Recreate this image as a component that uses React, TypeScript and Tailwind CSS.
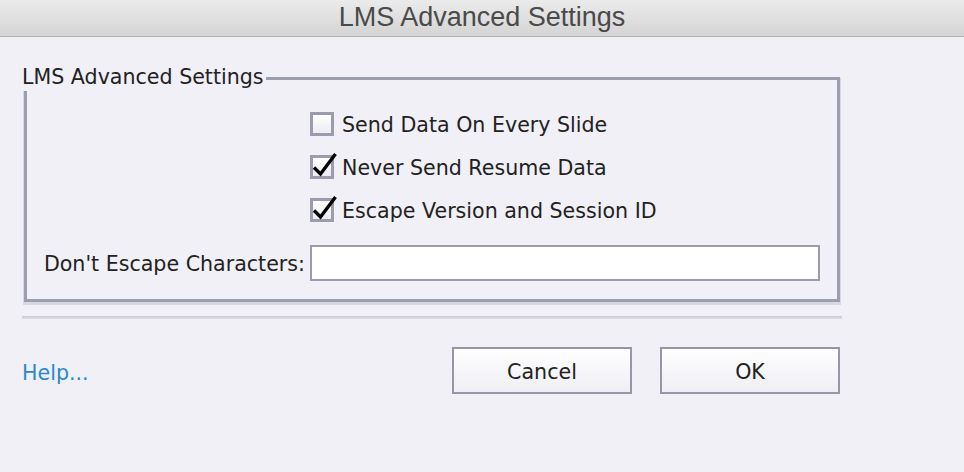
import React from "react";

function Check({ checked }: { checked: boolean }) {
  return (
    <span className="relative block w-[24px] h-[24px] shrink-0 border-[3px] border-[#9b9dae] bg-gradient-to-b from-[#ffffff] to-[#ececf2]">
      {checked && (
        <svg
          className="absolute left-[-3px] top-[-3px] overflow-visible"
          width="24"
          height="24"
          viewBox="0 0 24 24"
        >
          <path
            d="M4 12.5 L10.5 19 L25.5 -1"
            fill="none"
            stroke="#000"
            strokeWidth="3.4"
            strokeLinecap="butt"
            strokeLinejoin="miter"
          />
        </svg>
      )}
    </span>
  );
}

function Row({ label, checked }: { label: string; checked: boolean }) {
  return (
    <div className="flex items-center h-[24px] gap-[8px]">
      <Check checked={checked} />
      <span className="leading-none whitespace-nowrap pt-[3px]">{label}</span>
    </div>
  );
}

export default function App() {
  return (
    <div
      className="w-[964px] h-[472px] bg-[#f0f0f6] text-[#222222] overflow-hidden"
      style={{ fontFamily: '"DejaVu Sans", Verdana, sans-serif' }}
    >
      <div
        className="h-[37px] flex items-center justify-center border-b border-[#b3b3b3] bg-gradient-to-b from-[#ebebeb] to-[#d4d4d4] text-[27px] text-[#4a4a4a] leading-none pb-[2px]"
        style={{ fontFamily: '"Liberation Sans", Arial, sans-serif' }}
      >
        LMS Advanced Settings
      </div>

      <div className="pl-[22px] w-[842px] text-[20.6px]">
        <div className="relative ml-[2px] mt-[40px] w-[816px] h-[225px] border-[3px] border-[#9c9eaf] shadow-[0_2px_0_1px_#d6d7df] pt-[32px] pl-[283px] pr-[17px]">
          <div className="absolute left-[-5px] top-[-16px] h-[27px] pr-[2px] bg-[#f0f0f6] leading-none whitespace-nowrap flex items-center">
            LMS Advanced Settings
          </div>
          <div className="flex flex-col gap-[19px]">
            <Row label="Send Data On Every Slide" checked={false} />
            <Row label="Never Send Resume Data" checked={true} />
            <Row label="Escape Version and Session ID" checked={true} />
          </div>
          <div className="mt-[23px] ml-[-283px] flex items-center">
            <div className="w-[283px] pr-[5px] pt-[2px] text-right leading-none whitespace-nowrap">
              Don't Escape Characters:
            </div>
            <div className="flex-1 h-[36px] bg-white border-2 border-[#9a9cad]" />
          </div>
        </div>

        <div className="mt-[14px] h-[3px] w-[820px] bg-[#d6d7df] border-t border-[#cacbd3]" />

        <div className="mt-[28px] flex items-center">
          <span className="text-[#2a8acb] leading-none pt-[5px]">Help...</span>
          <div className="ml-auto mr-[2px] flex gap-[28px]">
            <button className="w-[180px] h-[47px] pt-[4px] border-2 border-[#9597a9] bg-gradient-to-b from-[#ffffff] to-[#eeeef4] text-[20.6px] text-[#222222] leading-none">
              Cancel
            </button>
            <button className="w-[180px] h-[47px] pt-[4px] border-2 border-[#9597a9] bg-gradient-to-b from-[#ffffff] to-[#eeeef4] text-[20.6px] text-[#222222] leading-none">
              OK
            </button>
          </div>
        </div>
      </div>
    </div>
  );
}
